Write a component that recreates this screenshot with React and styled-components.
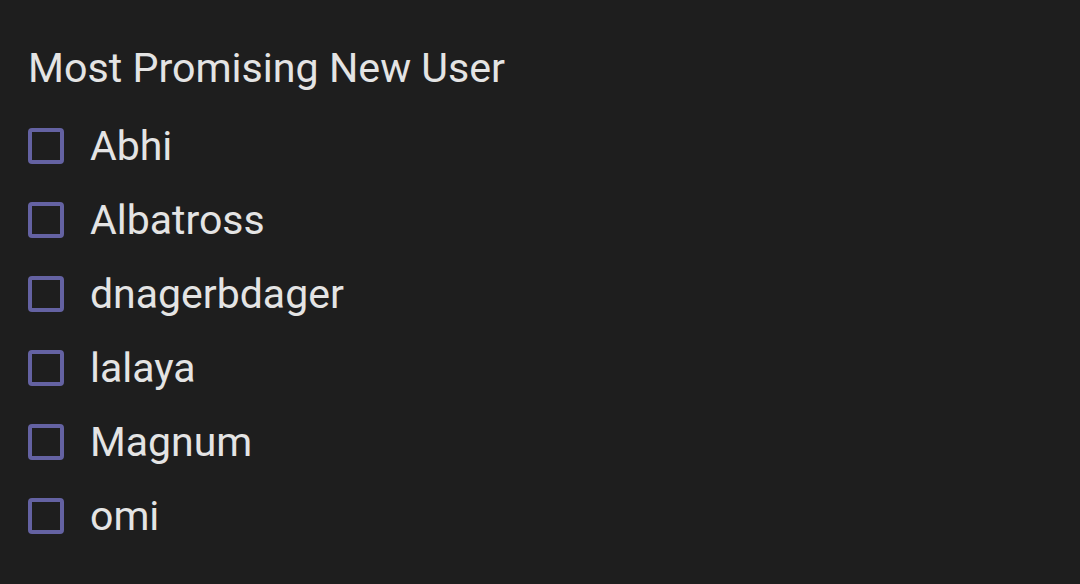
import React from "react";
import styled, { createGlobalStyle } from "styled-components";

const GlobalStyle = createGlobalStyle`
  html, body {
    margin: 0;
    padding: 0;
    background: #1e1e1e;
  }
  body {
    font-family: Roboto, "Noto Sans", sans-serif;
    color: #e4e4e4;
  }
`;

const Panel = styled.div`
  width: 1080px;
  height: 584px;
  box-sizing: border-box;
  padding: 44px 0 0 28px;
  background: #1e1e1e;
`;

const Title = styled.div`
  font-size: 41.2px;
  line-height: 48px;
  color: #e4e4e4;
  margin-bottom: 30px;
`;

const List = styled.div`
  display: flex;
  flex-direction: column;
  gap: 26px;
`;

const Row = styled.label`
  display: flex;
  align-items: center;
  height: 48px;
  cursor: pointer;
`;

const Box = styled.span`
  width: 36px;
  height: 36px;
  box-sizing: border-box;
  border: 4px solid #6462a2;
  border-radius: 4px;
  flex-shrink: 0;
  margin-right: 26px;
  background: ${(p) => (p.checked ? "#6462a2" : "transparent")};
`;

const Name = styled.span`
  font-size: 41px;
  line-height: 48px;
  color: #e4e4e4;
`;

const users = ["Abhi", "Albatross", "dnagerbdager", "lalaya", "Magnum", "omi"];

export default function App() {
  const [checked, setChecked] = React.useState({});
  return (
    <>
      <GlobalStyle />
      <Panel>
        <Title>Most Promising New User</Title>
        <List>
          {users.map((u) => (
            <Row key={u} onClick={() => setChecked((c) => ({ ...c, [u]: !c[u] }))}>
              <Box checked={!!checked[u]} />
              <Name>{u}</Name>
            </Row>
          ))}
        </List>
      </Panel>
    </>
  );
}
